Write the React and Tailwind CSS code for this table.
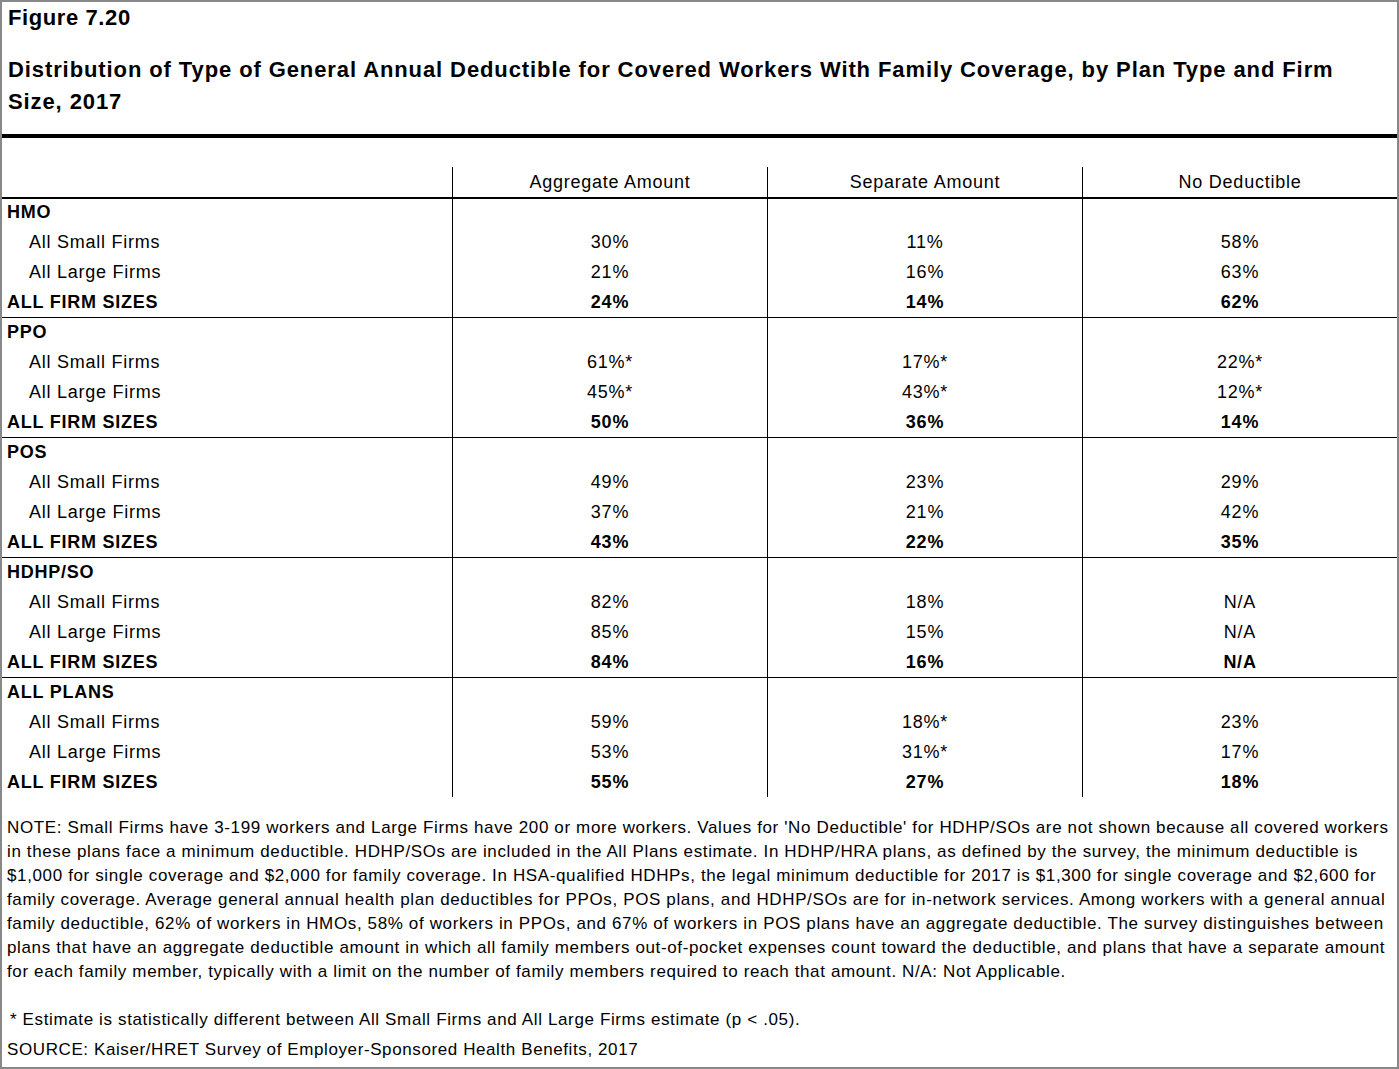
const groups = [
    { name: "HMO", rows: [["30%", "11%", "58%"], ["21%", "16%", "63%"], ["24%", "14%", "62%"]] },
    { name: "PPO", rows: [["61%*", "17%*", "22%*"], ["45%*", "43%*", "12%*"], ["50%", "36%", "14%"]] },
    { name: "POS", rows: [["49%", "23%", "29%"], ["37%", "21%", "42%"], ["43%", "22%", "35%"]] },
    { name: "HDHP/SO", rows: [["82%", "18%", "N/A"], ["85%", "15%", "N/A"], ["84%", "16%", "N/A"]] },
    { name: "ALL PLANS", rows: [["59%", "18%*", "23%"], ["53%", "31%*", "17%"], ["55%", "27%", "18%"]] },
];

const rowLabels = ["All Small Firms", "All Large Firms", "ALL FIRM SIZES"];

const noteLines = [
    "NOTE: Small Firms have 3-199 workers and Large Firms have 200 or more workers. Values for 'No Deductible' for HDHP/SOs are not shown because all covered workers",
    "in these plans face a minimum deductible. HDHP/SOs are included in the All Plans estimate. In HDHP/HRA plans, as defined by the survey, the minimum deductible is",
    "$1,000 for single coverage and $2,000 for family coverage. In HSA-qualified HDHPs, the legal minimum deductible for 2017 is $1,300 for single coverage and $2,600 for",
    "family coverage. Average general annual health plan deductibles for PPOs, POS plans, and HDHP/SOs are for in-network services. Among workers with a general annual",
    "family deductible, 62% of workers in HMOs, 58% of workers in PPOs, and 67% of workers in POS plans have an aggregate deductible. The survey distinguishes between",
    "plans that have an aggregate deductible amount in which all family members out-of-pocket expenses count toward the deductible, and plans that have a separate amount",
    "for each family member, typically with a limit on the number of family members required to reach that amount. N/A: Not Applicable.",
];

const Row = ({ label, values = ["", "", ""], bold, indent }) => (
    <div className={`grid grid-cols-[450px_315px_315px_315px] h-[30px] leading-[30px] ${bold ? "font-bold" : ""}`}>
        <div className={`whitespace-nowrap ${indent ? "pl-[27px]" : "pl-[5px]"}`}>{label}</div>
        {values.map((v, i) => (
            <div key={i} className="border-l border-black text-center">
                {v}
            </div>
        ))}
    </div>
);

const App = () => {
    return (
        <div className="w-[1399px] h-[1069px] border-2 border-[#888888] bg-white text-black font-['Liberation_Sans',Arial,sans-serif] overflow-hidden">
            <div className="pl-[6px] pt-[2px] text-[22px] font-bold leading-[28px] tracking-[0.6px]">
                Figure 7.20
            </div>
            <div className="mt-[22px] pl-[6px] text-[22px] font-bold leading-[32px] tracking-[0.9px] whitespace-nowrap">
                Distribution of Type of General Annual Deductible for Covered Workers With Family Coverage, by Plan Type and Firm
                <br />
                Size, 2017
            </div>
            <div className="mt-[16px] border-t-4 border-black" />

            <div className="mt-[29px] text-[18px] tracking-[0.75px]">
                <div className="relative z-10 -mb-[2px] border-b-2 border-black">
                    <Row label="" values={["Aggregate Amount", "Separate Amount", "No Deductible"]} />
                </div>
                {groups.map((g, gi) => (
                    <div
                        key={g.name}
                        className={gi < groups.length - 1 ? "border-b border-black -mb-px" : ""}
                    >
                        <Row label={g.name} bold />
                        {g.rows.map((r, ri) => (
                            <Row
                                key={ri}
                                label={rowLabels[ri]}
                                values={r}
                                bold={ri === 2}
                                indent={ri < 2}
                            />
                        ))}
                    </div>
                ))}
            </div>

            <div className="mt-[19px] pl-[5px] text-[17px] leading-[24px] tracking-[0.63px]">
                {noteLines.map((line, i) => (
                    <div key={i} className="whitespace-nowrap">
                        {line}
                    </div>
                ))}
            </div>

            <div className="mt-[24px] pl-[8px] text-[17px] leading-[24px] tracking-[0.63px] whitespace-nowrap">
                * Estimate is statistically different between All Small Firms and All Large Firms estimate (p &lt; .05).
            </div>
            <div className="mt-[6px] pl-[5px] text-[17px] leading-[24px] tracking-[0.6px] whitespace-nowrap">
                SOURCE: Kaiser/HRET Survey of Employer-Sponsored Health Benefits, 2017
            </div>
        </div>
    );
};

export default App;
